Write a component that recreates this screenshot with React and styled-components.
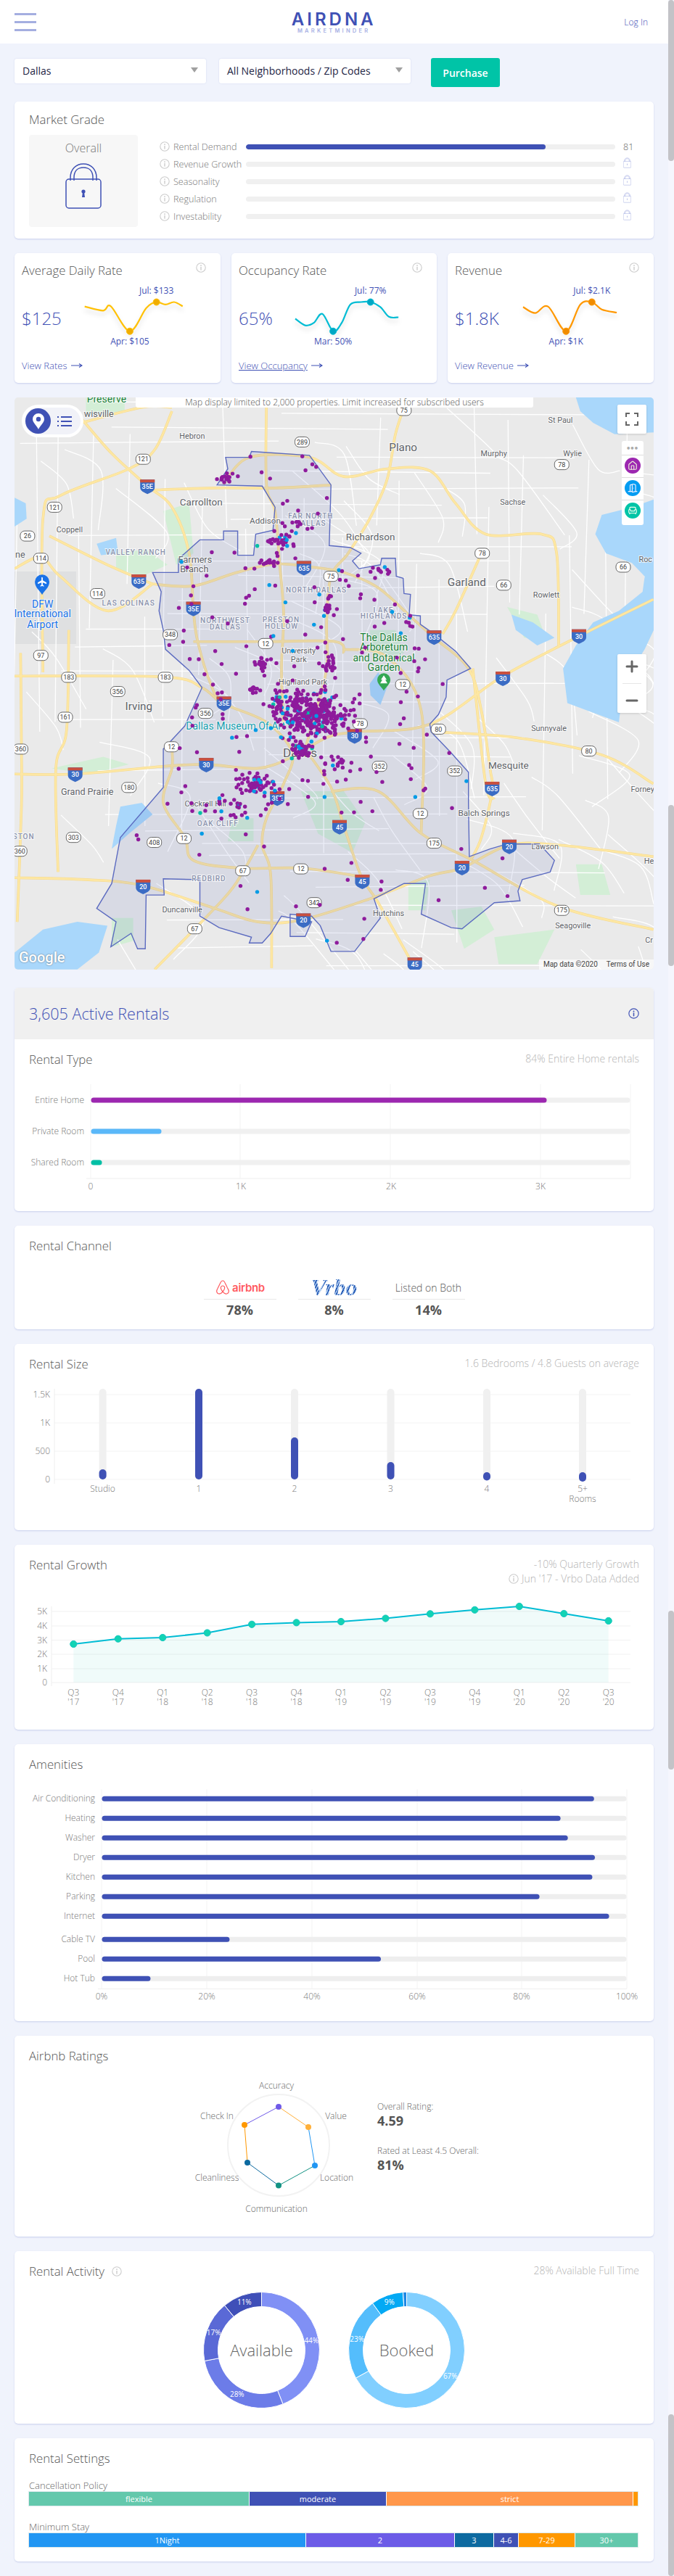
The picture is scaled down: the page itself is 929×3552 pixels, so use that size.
import React from "react";
import styled, { createGlobalStyle } from "styled-components";
import { FaAirbnb } from "react-icons/fa";
import { Home, DoorOpen, Armchair, Plus, Minus } from "lucide-react";

const PRIMARY = "#3f51b5";

const GlobalStyle = createGlobalStyle`
  html, body {
    margin: 0;
    padding: 0;
    overflow: hidden;
    background: #f0f3fc;
  }
  body {
    font-family: "Open Sans", "Liberation Sans", sans-serif;
    color: #5c5c5c;
  }
  * { box-sizing: border-box; }
`;

const Page = styled.div`
  position: relative;
  width: 929px;
  height: 3552px;
  overflow: hidden;
`;

const ScrollTrack = styled.div`
  position: absolute;
  top: 0;
  right: 0;
  width: 8px;
  height: 100%;
  background: #f5f6fd;
`;

const ScrollThumb = styled.div`
  position: absolute;
  left: 0;
  width: 8px;
  top: ${p => p.$top}px;
  height: ${p => p.$height}px;
  background: #c3c3c7;
  border-radius: 4px;
`;

const Header = styled.header`
  height: 60px;
  background: #fff;
  display: flex;
  align-items: center;
  justify-content: space-between;
  padding: 0 36px 0 20px;
`;

const Burger = styled.div`
  width: 30px;
  display: flex;
  flex-direction: column;
  gap: 8px;

  span {
    height: 3px;
    background: #a4aee0;
    display: block;
  }
`;

const Logo = styled.div`
  display: flex;
  flex-direction: column;
  align-items: center;
  margin: 3px 0 0 10px;
`;

const LogoMain = styled.div`
  font-family: "Inter", "Liberation Sans", sans-serif;
  font-size: 24px;
  font-weight: 600;
  letter-spacing: 4px;
  line-height: 23px;
  color: ${PRIMARY};
`;

const LogoSub = styled.div`
  font-family: "Inter", "Liberation Sans", sans-serif;
  font-size: 7.5px;
  font-weight: 600;
  letter-spacing: 3.25px;
  line-height: 10px;
  color: #a7b0e4;
`;

const LogIn = styled.a`
  font-size: 12px;
  color: ${PRIMARY};
  font-weight: 300;
`;

const Main = styled.main`
  padding: 20px 28px 0 20px;
  display: flex;
  flex-direction: column;
  gap: 20px;
`;

const Controls = styled.div`
  height: 40px;
  display: flex;
  align-items: flex-start;
`;

const Select = styled.div`
  width: 264px;
  height: 34px;
  margin: 1px 18px 0 0;
  background: #fff;
  border-radius: 3px;
  box-shadow: 0 0 2px rgba(63, 81, 181, 0.18);
  padding: 7px 11px 0;
  font-size: 14px;
  color: #1d2444;
  display: flex;
  justify-content: space-between;

  &::after {
    content: "";
    width: 0;
    height: 0;
    margin-top: 5px;
    border-left: 5px solid transparent;
    border-right: 5px solid transparent;
    border-top: 7px solid #a0a0a0;
  }
`;

const Purchase = styled.button`
  width: 95px;
  height: 40px;
  margin-left: 10px;
  border: 0;
  border-radius: 3px;
  background: #00c4a7;
  color: #fff;
  font-family: inherit;
  font-size: 14px;
  font-weight: 600;
`;

const Card = styled.section`
  background: #fff;
  border-radius: 5px;
  box-shadow: 0 1px 2px rgba(63, 81, 181, 0.22);
  height: ${p => p.$height}px;
  padding: ${p => p.$padding || "17px 20px 0"};
  overflow: hidden;
  position: relative;
`;

const TitleRow = styled.div`
  display: flex;
  justify-content: space-between;
  align-items: flex-start;
`;

const Title = styled.h3`
  margin: 0;
  font-size: 16.8px;
  line-height: 22px;
  font-weight: 300;
  color: #555;
  display: flex;
  align-items: center;
  gap: 10px;
`;

const Note = styled.div`
  font-size: 14px;
  line-height: 20px;
  font-weight: 300;
  color: #b4b4b4;
  text-align: right;
  display: flex;
  align-items: center;
  justify-content: flex-end;
  gap: 4px;
`;

const GradeLayout = styled.div`
  margin-top: 10px;
  display: flex;
  gap: 30px;
`;

const OverallBox = styled.div`
  width: 150px;
  height: 127px;
  background: #f7f7f7;
  border-radius: 4px;
  display: flex;
  flex-direction: column;
  align-items: center;
  padding-top: 7px;
  gap: 10px;
  font-size: 16px;
  font-weight: 300;
  color: #777;
`;

const GradeRows = styled.div`
  flex: 1;
  padding-top: 4px;
`;

const GradeRow = styled.div`
  height: 24px;
  display: grid;
  grid-template-columns: 19px 100px 509px 33px;
  align-items: center;
  font-size: 12.6px;
  font-weight: 300;
  color: #777;
`;

const GradeValue = styled.div`
  padding-left: 11px;
  color: #666;
`;

const Track = styled.div`
  height: 7px;
  border-radius: 4px;
  background: #f0f0f0;
  overflow: hidden;
`;

const Fill = styled.div`
  height: 100%;
  border-radius: 4px;
  background: ${PRIMARY};
`;

const KpiRow = styled.div`
  display: grid;
  grid-template-columns: 284px 283px 284px;
  gap: 15px;
`;

const KpiCard = styled.section`
  background: #fff;
  border-radius: 5px;
  box-shadow: 0 1px 2px rgba(63, 81, 181, 0.22);
  height: 179px;
  padding: 13px 10px 0;
  position: relative;
`;

const KpiInfo = styled.div`
  position: absolute;
  top: 10px;
  right: 20px;
`;

const KpiBody = styled.div`
  display: grid;
  grid-template-columns: 70px 1fr;
  margin-top: 11px;
  height: 90px;
`;

const KpiValue = styled.div`
  font-size: 24px;
  font-weight: 300;
  color: ${PRIMARY};
  line-height: 42px;
  margin-top: 23px;
  white-space: nowrap;
`;

const SparkSvg = styled.svg`
  overflow: visible;
`;

const SparkLine = styled.path`
  fill: none;
  stroke-width: 2.2;
  filter: drop-shadow(0 5px 3px rgba(0, 0, 0, 0.13));
`;

const SparkLabel = styled.text`
  font-size: 12px;
  font-weight: 400;
  fill: ${PRIMARY};
  text-anchor: middle;
`;

const ViewLink = styled.a`
  display: inline-flex;
  align-items: center;
  gap: 5px;
  margin-top: 10px;
  font-size: 13px;
  font-weight: 300;
  color: ${PRIMARY};

  span {
    text-decoration: ${p => (p.$underlined ? "underline" : "none")};
  }
`;

const MapCard = styled.section`
  position: relative;
  height: 789px;
  border-radius: 5px;
  overflow: hidden;
  background: #eaeaea;
  margin-bottom: 5px;
`;

const MapCanvas = styled.svg`
  display: block;
`;

const MapLabel = styled.text`
  font-family: "Roboto", "Liberation Sans", sans-serif;
  paint-order: stroke;
  stroke: rgba(255, 255, 255, 0.75);
  stroke-width: 2px;
`;

const ShieldText = styled.text`
  font-family: "Roboto", "Liberation Sans", sans-serif;
  font-size: 9px;
  text-anchor: middle;
`;

const MapNotice = styled.div`
  position: absolute;
  top: 0;
  left: 167px;
  width: 548px;
  height: 14px;
  background: #fff;
  border-radius: 0 0 3px 3px;
  font-size: 12px;
  font-weight: 300;
  line-height: 14px;
  color: #555;
  text-align: center;
  white-space: nowrap;
`;

const ViewToggle = styled.div`
  position: absolute;
  top: 10px;
  left: 10px;
  width: 85px;
  height: 45px;
  border-radius: 23px;
  background: #f1f2f8;
  border: 4px solid #fff;
  display: flex;
  align-items: center;
  justify-content: space-between;
  padding: 0 12px 0 1px;
`;

const ToggleOn = styled.div`
  width: 35px;
  height: 35px;
  border-radius: 50%;
  background: ${PRIMARY};
  display: flex;
  align-items: center;
  justify-content: center;
`;

const MapButton = styled.div`
  position: absolute;
  right: 10px;
  top: 10px;
  width: 40px;
  height: 40px;
  background: #fff;
  border-radius: 2px;
  box-shadow: 0 1px 3px rgba(0, 0, 0, 0.15);
  display: flex;
  align-items: center;
  justify-content: center;
`;

const LayerPanel = styled.div`
  position: absolute;
  right: 14px;
  top: 60px;
  width: 30px;
  height: 116px;
  background: #fff;
  border-radius: 3px;
  display: flex;
  flex-direction: column;
  align-items: center;
  padding-top: 3px;
`;

const Dots3 = styled.div`
  font-size: 11px;
  line-height: 14px;
  letter-spacing: 1px;
  font-weight: 800;
  color: #aaa;
  height: 16px;
`;

const LayerItem = styled.div`
  width: 100%;
  border-top: 1px solid #ddd;
  padding: 3px 4px;
  height: 31px;
`;

const LayerDot = styled.div`
  width: 22px;
  height: 22px;
  border-radius: 50%;
  background: ${p => p.$color};
  display: flex;
  align-items: center;
  justify-content: center;
`;

const ZoomBox = styled.div`
  position: absolute;
  right: 10px;
  top: 354px;
  width: 40px;
  height: 81px;
  background: #fff;
  border-radius: 2px;
  box-shadow: 0 1px 3px rgba(0, 0, 0, 0.15);
  display: flex;
  flex-direction: column;
  align-items: center;
  justify-content: space-around;
  color: #666;
`;

const ZoomDivider = styled.div`
  width: 26px;
  height: 1px;
  background: #e6e6e6;
`;

const GoogleMark = styled.div`
  position: absolute;
  left: 6px;
  bottom: 5px;
  font-family: "Roboto", "Liberation Sans", sans-serif;
  font-size: 20px;
  font-weight: 500;
  color: #fff;
  text-shadow: 0 0 2px rgba(0, 0, 0, 0.55);
  line-height: 24px;
`;

const Attribution = styled.div`
  position: absolute;
  right: 0;
  bottom: 0;
  height: 14px;
  padding: 0 6px;
  background: rgba(255, 255, 255, 0.6);
  font-family: "Roboto", "Liberation Sans", sans-serif;
  font-size: 10px;
  line-height: 14px;
  color: #444;
  display: flex;
  gap: 12px;
`;

const RentalsCard = styled.section`
  background: #fff;
  border-radius: 5px;
  box-shadow: 0 1px 2px rgba(63, 81, 181, 0.22);
  height: 308px;
  overflow: hidden;
`;

const RentalsHead = styled.div`
  height: 71px;
  background: #f0f0f0;
  display: flex;
  align-items: center;
  justify-content: space-between;
  padding: 0 20px;
  font-size: 21.6px;
  font-weight: 300;
  color: ${PRIMARY};
`;

const RentalsBody = styled.div`
  padding: 17px 20px 0;
`;

// chart coordinates are page x, so each chart svg starts at the left page edge
const ChartSvg = styled.svg`
  display: block;
  margin: ${p => p.$top || 0}px 0 0 -40px;
  overflow: visible;
`;

const Tick = styled.text`
  font-size: 12px;
  font-weight: 300;
  fill: #777;
  text-anchor: ${p => p.$anchor || "middle"};
`;

const ChannelRow = styled.div`
  display: flex;
  justify-content: center;
  gap: 30px;
  margin-top: 33px;
`;

const Channel = styled.div`
  width: 100px;
  display: flex;
  flex-direction: column;
  align-items: center;
`;

const ChannelLogo = styled.div`
  height: 26px;
  width: 100%;
  display: flex;
  align-items: center;
  justify-content: center;
  gap: 2px;
  font-size: 14px;
  font-weight: 300;
  color: #555;
`;

const AirbnbWord = styled.span`
  color: #ff5a5f;
  font-family: "Inter", "Liberation Sans", sans-serif;
  font-size: 15px;
  font-weight: 600;
  letter-spacing: -0.3px;
`;

const VrboWord = styled.span`
  font-family: "Liberation Serif", serif;
  font-size: 32px;
  line-height: 30px;
  font-weight: 700;
  font-style: italic;
  background: repeating-linear-gradient(115deg, #2a5cb5 0 1.5px, #a9c9f0 1.5px 3px);
  -webkit-background-clip: text;
  background-clip: text;
  color: transparent;
`;

const ChannelPct = styled.div`
  width: 100%;
  border-top: 1px solid #e8e8e8;
  margin-top: 3px;
  padding-top: 2px;
  text-align: center;
  font-size: 18px;
  line-height: 24px;
  font-weight: 700;
  color: #555;
`;

const RatingsRow = styled.div`
  display: flex;
  margin: 13px 0 0 200px;
`;

const RatingStats = styled.div`
  margin: 37px 0 0 10px;
`;

const StatLabel = styled.div`
  font-size: 12px;
  line-height: 18px;
  font-weight: 300;
  color: #666;
`;

const StatValue = styled.div`
  font-size: 18px;
  line-height: 20px;
  font-weight: 700;
  color: #555;
  margin-bottom: 23px;
`;

const RadarSvg = styled.svg`
  display: block;
  overflow: visible;
`;

const RadarLabel = styled.text`
  font-size: 12px;
  font-weight: 300;
  fill: #666;
  text-anchor: middle;
`;

const DonutRow = styled.div`
  display: flex;
  gap: 39px;
  margin: 17px 0 0 240px;
`;

const DonutSvg = styled.svg`
  display: block;
`;

const DonutText = styled.text`
  font-size: 10px;
  fill: #fff;
  text-anchor: middle;
`;

const DonutTitle = styled.text`
  font-size: 22px;
  font-weight: 300;
  fill: #666;
  text-anchor: middle;
`;

const SettingLabel = styled.div`
  font-size: 13px;
  line-height: 16px;
  font-weight: 300;
  color: #666;
  margin-top: ${p => p.$top}px;
`;

const SegBar = styled.div`
  display: flex;
  width: 839px;
  height: 19px;
  margin-top: 1px;
  box-shadow: 0 0 0 1px #dce9ec;
`;

const Seg = styled.div`
  flex: 0 0 ${p => p.$w}px;
  background: ${p => p.$color};
  color: #fff;
  font-size: 11px;
  line-height: 19px;
  text-align: center;
  border-right: 1px solid #fff;

  &:last-child { border-right: 0; }
`;

// --- helpers ---

const smooth = pts => {
  let d = `M${pts[0][0].toFixed(1)} ${pts[0][1].toFixed(1)}`;
  for (let i = 0; i < pts.length - 1; i++) {
    const a = pts[i - 1] || pts[i];
    const b = pts[i];
    const c = pts[i + 1];
    const e = pts[i + 2] || c;
    const c1 = [b[0] + (c[0] - a[0]) / 6, b[1] + (c[1] - a[1]) / 6];
    const c2 = [c[0] - (e[0] - b[0]) / 6, c[1] - (e[1] - b[1]) / 6];
    d += `C${c1[0].toFixed(1)} ${c1[1].toFixed(1)} ${c2[0].toFixed(1)} ${c2[1].toFixed(1)} ${c[0].toFixed(1)} ${c[1].toFixed(1)}`;
  }
  return d;
};

const rng = seed => () => {
  seed |= 0;
  seed = (seed + 0x6d2b79f5) | 0;
  let t = Math.imul(seed ^ (seed >>> 15), 1 | seed);
  t = (t + Math.imul(t ^ (t >>> 7), 61 | t)) ^ t;
  return ((t ^ (t >>> 14)) >>> 0) / 4294967296;
};

const InfoIcon = ({ size = 14, color = "#ccc" }) => (
  <svg width={size} height={size} viewBox="0 0 14 14">
    <circle cx="7" cy="7" r="6.2" fill="none" stroke={color} strokeWidth="1.1" />
    <circle cx="7" cy="4.2" r="0.9" fill={color} />
    <rect x="6.3" y="6" width="1.4" height="4.6" fill={color} />
  </svg>
);

const Lock = ({ w, h, color, stroke = 1.5 }) => (
  <svg width={w} height={h} viewBox="0 0 50 63">
    <path d="M7 24V20C7 8 15 1 25 1s18 7 18 19v4" fill="none" stroke={color} strokeWidth={stroke} />
    <path d="M12 24V20C12 11 17 6 25 6s13 5 13 14v4" fill="none" stroke={color} strokeWidth={stroke} />
    <rect x="1" y="22" width="48" height="40" rx="4" fill="none" stroke={color} strokeWidth={stroke} />
    <circle cx="25" cy="39" r="2.6" fill={color} />
    <path d="M24 40h2l1 7h-4z" fill={color} />
  </svg>
);

// --- market grade ---

const grades = [
  { label: "Rental Demand", fill: 81.2, value: "81" },
  { label: "Revenue Growth" },
  { label: "Seasonality" },
  { label: "Regulation" },
  { label: "Investability" },
];

// --- KPI sparklines; points are read off the reference at 1.688 x 2.958 scale ---

const kpis = [
  {
    title: "Average Daily Rate", value: "$125", link: "View Rates", cardX: 20,
    color: "#ffc107", dot: "#f0ad00",
    line: [[197, 1253], [240, 1270], [258, 1252], [302, 1354], [340, 1260], [364, 1235], [385, 1245], [405, 1235], [425, 1252]],
    high: [364, 1235, "Jul: $133"], low: [302, 1354, "Apr: $105"],
  },
  {
    title: "Occupancy Rate", value: "65%", link: "View Occupancy", cardX: 319, underlined: true,
    color: "#00bcd4", dot: "#00a7c4",
    line: [[687, 1303], [710, 1330], [730, 1320], [750, 1283], [775, 1354], [795, 1320], [815, 1245], [840, 1235], [862, 1235], [885, 1255], [905, 1295], [927, 1297]],
    high: [862, 1235, "Jul: 77%"], low: [775, 1354, "Mar: 50%"],
  },
  {
    title: "Revenue", value: "$1.8K", link: "View Revenue", cardX: 617,
    color: "#ff9800", dot: "#f08c00",
    line: [[1217, 1255], [1245, 1280], [1275, 1253], [1317, 1354], [1350, 1245], [1377, 1235], [1400, 1265], [1435, 1278]],
    high: [1377, 1235, "Jul: $2.1K"], low: [1317, 1354, "Apr: $1K"],
  },
];

const Spark = ({ kpi }) => {
  const cx = zx => zx / 1.688 - (kpi.cardX + 80);
  const cy = zy => zy / 2.958 - 396;
  const pts = kpi.line.map(([x, y]) => [cx(x), cy(y)]);
  return (
    <SparkSvg width="194" height="90">
      <SparkLine d={smooth(pts)} stroke={kpi.color} />
      {[kpi.high, kpi.low].map(([x, y]) => (
        <circle key={x} cx={cx(x)} cy={cy(y)} r="4.5" fill={kpi.dot} stroke={kpi.color} />
      ))}
      <SparkLabel x={cx(kpi.high[0])} y={cy(1188) + 4}>{kpi.high[2]}</SparkLabel>
      <SparkLabel x={cx(kpi.low[0])} y={cy(1395) + 4}>{kpi.low[2]}</SparkLabel>
    </SparkSvg>
  );
};

// --- map data, all in the coordinates of a 1568x1568 view of the map area ---

const mx = zx => zx / 1.688 - 20;
const my = zy => zy / 1.889 - 18;
const toMap = ([x, y]) => [mx(x), my(y)];

const boundary = [[525,190],[580,190],[585,175],[720,185],[770,262],[766,420],[815,425],[840,440],[820,460],[835,480],[885,470],[888,453],[920,453],[922,500],[938,505],[940,545],[955,547],[952,600],[978,603],[978,625],[1010,650],[1060,695],[1095,740],[1040,770],[1038,815],[1020,860],[1000,885],[1003,905],[1050,960],[1090,1010],[1090,1090],[1092,1230],[1140,1210],[1180,1197],[1255,1197],[1290,1240],[1280,1270],[1215,1290],[1205,1320],[1210,1345],[1150,1350],[1075,1418],[1050,1415],[980,1380],[990,1300],[940,1300],[870,1340],[885,1390],[825,1477],[770,1477],[745,1410],[725,1385],[675,1380],[675,1438],[710,1438],[725,1400],[655,1385],[630,1430],[610,1455],[580,1455],[585,1440],[510,1415],[465,1385],[465,1290],[380,1288],[382,1330],[340,1330],[338,1470],[320,1470],[305,1430],[258,1465],[270,1400],[225,1365],[260,1300],[280,1180],[380,1050],[380,950],[430,890],[470,790],[440,745],[385,690],[380,640],[370,590],[375,540],[355,490],[415,490],[415,455],[465,405],[520,405],[520,382],[553,382],[553,445],[590,445],[595,390],[635,380],[640,320],[610,265],[505,262],[530,220]];

const highways = [
  [[355,520],[450,525],[550,490],[640,468],[720,475],[800,490],[880,530],[960,610],[1010,660],[1090,740],[1120,850],[1140,1000],[1145,1060],[1120,1180],[1095,1240]],
  [[190,90],[260,180],[340,262],[400,320],[440,440],[450,590],[460,670],[490,780],[520,830],[620,880],[680,960],[660,1040],[620,1130],[610,1200],[630,1280],[632,1520]],
  [[940,60],[920,130],[900,250],[860,350],[810,440],[770,500],[760,620],[760,740],[730,870],[710,950]],
  [[34,480],[95,450],[140,500],[250,590],[355,520]],
  [[115,395],[250,470],[355,520]],
  [[100,750],[100,350],[140,290],[300,220],[360,170],[400,70]],
  [[190,100],[330,60],[400,60]],
  [[360,275],[500,270],[640,270],[770,262]],
  [[620,34],[620,260],[640,330],[650,460],[660,600],[655,740],[660,900]],
  [[520,260],[580,190],[720,190],[800,240],[900,220],[1000,225],[1060,310],[1130,390],[1260,390],[1295,440],[1300,680]],
  [[34,1015],[175,1015],[380,995],[480,990],[600,1000],[680,970],[760,920],[830,905],[1000,885],[1170,760],[1340,660],[1520,560]],
  [[34,1285],[200,1290],[330,1305],[500,1365],[600,1400],[700,1395],[860,1340],[1000,1280],[1075,1260],[1185,1200],[1300,1200],[1520,1230]],
  [[710,950],[770,1050],[800,1150],[840,1280],[880,1350],[960,1510]],
  [[770,1060],[880,1060],[980,1170],[1100,1240],[1300,1360],[1520,1420]],
  [[400,950],[400,1000],[380,1090],[430,1180],[450,1240],[560,1260],[700,1260],[830,1280]],
  [[800,690],[900,710],[980,850],[980,1170]],
  [[34,760],[380,762],[470,790],[520,840]],
  [[48,700],[50,950],[50,1100],[40,1400]],
  [[1010,905],[1200,920],[1400,965],[1520,1040]],
  [[160,640],[155,900],[130,1000],[135,1270]],
  [[360,1524],[520,1340],[565,1270],[600,1200]],
  [[1120,440],[1060,590],[1030,650]],
  [[1100,740],[1130,1040],[1150,1080]],
  [[450,670],[620,670],[780,670],[800,700]],
];

const water = [
  [[1400,340],[1385,390],[1410,440],[1470,465],[1500,500],[1495,540],[1440,590],[1380,620],[1340,680],[1310,740],[1320,830],[1440,880],[1450,780],[1500,690],[1521,640],[1521,300],[1470,320]],
  [[1340,34],[1521,34],[1521,125],[1430,130],[1380,100],[1350,70]],
  [[34,1480],[100,1420],[180,1400],[250,1410],[230,1480],[180,1524],[34,1524]],
  [[280,1100],[330,1090],[355,1120],[300,1170],[260,1210],[270,1150]],
  [[225,415],[270,400],[275,440],[235,445]],
  [[34,295],[60,310],[62,350],[34,370]],
  [[860,780],[880,750],[900,790],[885,835],[862,810]],
  [[1190,600],[1240,620],[1290,660],[1250,680],[1200,640]],
];

const parks = [
  [[270,440],[340,430],[390,470],[330,500],[270,480]],
  [[380,330],[440,310],[450,440],[410,470]],
  [[200,34],[290,34],[290,70],[200,80]],
  [[1180,580],[1250,600],[1270,660],[1220,660]],
  [[700,1060],[800,1060],[850,1140],[820,1220],[740,1170]],
  [[260,1390],[310,1390],[310,1450],[260,1465]],
  [[1050,1370],[1120,1360],[1150,1420],[1080,1470]],
  [[860,640],[920,640],[940,700],[870,720]],
  [[540,1130],[590,1130],[590,1190],[530,1190]],
  [[120,1000],[240,970],[300,990],[210,1015]],
  [[1150,1440],[1290,1420],[1250,1510],[1160,1510]],
  [[950,1300],[1000,1290],[990,1370],[950,1370]],
  [[1340,1250],[1400,1250],[1420,1330],[1350,1330]],
];

const cityLabels = [
  ["Plano", 938, 173, 17], ["Garland", 1086, 525, 17], ["Irving", 323, 848, 17], ["Dallas", 698, 971, 19],
  ["Carrollton", 468, 316, 15], ["Richardson", 862, 407, 15], ["Mesquite", 1183, 1002, 15], ["Grand Prairie", 203, 1070, 14],
  ["Hebron", 447, 141, 12], ["Coppell", 162, 385, 12], ["Addison", 617, 362, 13], ["Murphy", 1149, 187, 12],
  ["St Paul", 1304, 101, 12], ["Wylie", 1332, 187, 12], ["Sachse", 1193, 313, 12], ["Rowlett", 1271, 555, 12],
  ["Sunnyvale", 1277, 903, 12], ["Forney", 1495, 1062, 12], ["Balch Springs", 1126, 1124, 13], ["Seagoville", 1333, 1417, 12],
  ["Duncanville", 424, 1376, 12], ["Hutchins", 904, 1384, 12], ["Lawson", 1268, 1211, 12], ["Cockrell Hill", 478, 1100, 12],
  ["University", 695, 700, 12], ["Park", 695, 723, 12], ["Highland Park", 705, 782, 12], ["Farmers", 454, 465, 14],
  ["Branch", 452, 489, 14], ["wisville", 230, 85, 14], ["ne", 47, 452, 14], ["Roc", 1502, 462, 12], ["He", 1510, 1248, 12], ["Cr", 1510, 1454, 12],
];

const areaLabels = [
  ["FAR NORTH", 723, 349], ["DALLAS", 723, 368], ["VALLEY RANCH", 316, 443], ["LAS COLINAS", 299, 576],
  ["NORTH DALLAS", 736, 542], ["NORTHWEST", 524, 621], ["DALLAS", 524, 638], ["PRESTON", 654, 619], ["HOLLOW", 655, 637],
  ["LAKE", 892, 595], ["HIGHLANDS", 893, 611], ["OAK CLIFF", 507, 1150], ["REDBIRD", 486, 1294], ["STON", 55, 1184],
];

const poiLabels = [
  ["DFW", 99, 581, "#1a73e8"], ["International", 99, 607, "#1a73e8"], ["Airport", 99, 634, "#1a73e8"],
  ["The Dallas", 893, 668, "#188038"], ["Arboretum", 893, 694, "#188038"], ["and Botanical", 893, 721, "#188038"], ["Garden", 893, 747, "#188038"],
  ["Dallas Museum Of Art", 548, 900, "#129eaf"], ["Preserve", 248, 48, "#188038"],
];

const stateShields = [[289,703,150],[121,333,195],[121,127,320],[26,64,395],[114,95,453],[114,227,545],[348,396,652],[97,95,706],[183,160,763],[183,385,763],[356,274,800],[161,152,867],[356,478,857],[360,48,950],[12,399,944],[352,883,995],[352,1058,1007],[78,838,884],[12,937,782],[12,618,675],[75,770,500],[78,1122,440],[78,1307,209],[66,1172,523],[66,1450,476],[175,1010,1195],[175,1307,1370],[12,978,1118],[12,428,1183],[408,359,1193],[303,171,1180],[180,300,1050],[360,46,1216],[67,565,1267],[12,700,1262],[342,731,1350],[67,453,1418],[80,1370,955],[80,1020,898],[75,940,68]];

const interstates = [["35E",343,265],["35E",450,583],["35E",521,830],["35E",645,1077],["635",323,512],["635",707,477],["635",1010,658],["635",1145,1052],["30",1347,655],["30",1170,765],["30",825,915],["30",480,990],["30",175,1015],["45",790,1152],["45",843,1294],["45",965,1510],["20",1075,1258],["20",1185,1203],["20",333,1307],["20",706,1395]];

const inside = (x, y, poly) => {
  let hit = false;
  for (let i = 0, j = poly.length - 1; i < poly.length; j = i++) {
    const [xi, yi] = poly[i];
    const [xj, yj] = poly[j];
    if (yi > y !== yj > y && x < ((xj - xi) * (y - yi)) / (yj - yi) + xi) hit = !hit;
  }
  return hit;
};

const makeDots = () => {
  const r = rng(2020);
  const gauss = () => (r() + r() + r() - 1.5) / 0.5;
  const clusters = [
    [728, 860, 40, 26, 340], [650, 835, 16, 22, 30], [700, 950, 13, 11, 55], [600, 1040, 22, 11, 70],
    [762, 580, 7, 14, 18], [655, 410, 14, 12, 28], [630, 462, 14, 6, 14], [525, 240, 9, 10, 16],
    [770, 735, 8, 12, 18], [610, 730, 8, 12, 16], [595, 795, 6, 7, 10], [880, 490, 14, 10, 12], [780, 990, 16, 10, 14],
    [540, 1110, 30, 16, 24], [690, 370, 10, 10, 6],
  ];
  const dots = [];
  const color = () => {
    const c = r();
    return c < 0.9 ? "#8e1b9c" : c < 0.985 ? "#039be5" : "#00bfa5";
  };
  clusters.forEach(([x, y, sx, sy, n]) => {
    for (let i = 0; i < n; i++) dots.push([x + gauss() * sx, y + gauss() * sy, color()]);
  });
  let added = 0;
  while (added < 230) {
    const x = 240 + r() * 1050;
    const y = 180 + r() * 1280;
    const weight = y < 1150 && x < 1060 ? 1 : 0.25;
    if (r() < weight && inside(x, y, boundary)) {
      dots.push([x, y, color()]);
      added++;
    }
  }
  return dots;
};

const makeStreets = () => {
  const r = rng(77);
  const lines = [];
  for (let x = 40; x < 1520; x += 34 + r() * 22) {
    const y0 = 34 + r() * 700;
    lines.push([[x, y0], [x + (r() - 0.5) * 24, y0 + 260 + r() * 600]]);
  }
  for (let y = 45; y < 1520; y += 28 + r() * 20) {
    const x0 = 34 + r() * 800;
    lines.push([[x0, y], [x0 + 260 + r() * 600, y + (r() - 0.5) * 14]]);
  }
  for (let i = 0; i < 90; i++) {
    const x = 40 + r() * 1450;
    const y = 40 + r() * 1450;
    lines.push([[x, y], [x + 40 + r() * 80, y + 30 + r() * 90], [x + 20 + r() * 150, y + 120 + r() * 100]]);
  }
  return lines;
};

const mapDots = makeDots();
const mapStreets = makeStreets();

const polyPoints = pts => pts.map(toMap).map(p => p.map(v => v.toFixed(1)).join(",")).join(" ");

const CityMap = () => (
  <MapCanvas width="881" height="789" viewBox="0 0 881 789">
    <rect x="0" y="240" width="85" height="100" fill="#dfe0e1" />
    {parks.map((p, i) => <polygon key={i} points={polyPoints(p)} fill="#d3eed6" />)}
    {mapStreets.map((l, i) => <path key={i} d={smooth(l.map(toMap))} fill="none" stroke="#fff" strokeWidth="1.3" />)}
    {water.map((p, i) => <polygon key={i} points={polyPoints(p)} fill="#a9d7fb" />)}
    {highways.map((h, i) => <path key={i} d={smooth(h.map(toMap))} fill="none" stroke="#f6d98c" strokeWidth="3.6" />)}
    {highways.map((h, i) => <path key={i} d={smooth(h.map(toMap))} fill="none" stroke="#fde7a3" strokeWidth="2.6" />)}
    <polygon points={polyPoints(boundary)} fill="rgba(63,81,181,0.1)" stroke="#5c6bc0" strokeWidth="1.4" />
    {cityLabels.map(([t, x, y, s]) => (
      <MapLabel key={t + x} x={mx(x)} y={my(y)} fontSize={s * 0.9} fill="#5f6368" textAnchor="middle">{t}</MapLabel>
    ))}
    {areaLabels.map(([t, x, y]) => (
      <MapLabel key={t + x} x={mx(x)} y={my(y)} fontSize="10" fontWeight="500" letterSpacing="1" fill="#8b93ad" textAnchor="middle">{t}</MapLabel>
    ))}
    {poiLabels.map(([t, x, y, c]) => (
      <MapLabel key={t} x={mx(x)} y={my(y)} fontSize="14" fill={c} textAnchor="middle">{t}</MapLabel>
    ))}
    {stateShields.map(([n, x, y]) => (
      <g key={`${n}-${x}`} transform={`translate(${mx(x)} ${my(y)})`}>
        <rect x="-10" y="-7" width="20" height="14" rx="6" fill="#fff" stroke="#666" strokeWidth="1" />
        <ShieldText y="3.2" fill="#444">{n}</ShieldText>
      </g>
    ))}
    {interstates.map(([n, x, y]) => (
      <g key={`${n}-${x}`} transform={`translate(${mx(x)} ${my(y)})`}>
        <path d="M-10 -9H10V2C10 7 4 9 0 11C-4 9 -10 7 -10 2Z" fill="#3b6cc4" />
        <path d="M-10 -9H10V-5H-10Z" fill="#c8503f" />
        <ShieldText y="4" fill="#fff" fontWeight="500">{n}</ShieldText>
      </g>
    ))}
    {mapDots.map(([x, y, c], i) => <circle key={i} cx={mx(x)} cy={my(y)} r="2.7" fill={c} />)}
    <g transform={`translate(${mx(893)} ${my(775)})`}>
      <path d="M0 12C-3 7 -9 3 -9 -3A9 9 0 1 1 9 -3C9 3 3 7 0 12Z" fill="#34a853" />
      <path d="M0 -9L4 -3H2L5 2H-5L-2 -3H-4Z" fill="#fff" />
    </g>
    <g transform={`translate(${mx(98)} ${my(520)})`}>
      <path d="M0 15C-3 9 -10 5 -10 -3A10 10 0 1 1 10 -3C10 5 3 9 0 15Z" fill="#1a73e8" />
      <path d="M-.9 -9C0 -10.5 .9 -9 .9 -8V-5L6 -2V0L.9 -2V1L2.5 2.5V3.5L0 2.8L-2.5 3.5V2.5L-.9 1V-2L-6 0V-2L-.9 -5Z" fill="#fff" />
    </g>
  </MapCanvas>
);

// --- charts ---

const RentalTypeChart = () => {
  const bars = [["Entire Home", 27, 754, "#9c27b0"], ["Private Room", 70, 223, "#5ab8f9"], ["Shared Room", 113, 141, "#00bfa5"]];
  return (
    <ChartSvg width="921" height="165" $top={18}>
      {[125, 331, 538, 745, 869].map(x => <line key={x} x1={x} x2={x} y1="5" y2="135" stroke="#f3f3f3" />)}
      <line x1="119" x2="869" y1="135" y2="135" stroke="#eee" />
      {bars.map(([label, y, end, color]) => (
        <g key={label}>
          <Tick x="116" y={y + 4} $anchor="end">{label}</Tick>
          <line x1="129" x2="865" y1={y} y2={y} stroke="#f0f0f0" strokeWidth="7" strokeLinecap="round" />
          <line x1="129" x2={end - 4} y1={y} y2={y} stroke={color} strokeWidth="7" strokeLinecap="round" />
        </g>
      ))}
      {[["0", 125], ["1K", 332], ["2K", 539], ["3K", 745]].map(([t, x]) => <Tick key={t} x={x} y="150">{t}</Tick>)}
    </ChartSvg>
  );
};

const RentalSizeChart = () => {
  const origin = 1905;
  const ticks = [["1.5K", 1923], ["1K", 1962], ["500", 2001], ["0", 2040]];
  const bars = [[141.6, 2026, "Studio"], [274, 1915, "1"], [406, 1982, "2"], [538.5, 2016, "3"], [671, 2031.5, "4"], [803, 2033, "5+"]];
  return (
    <ChartSvg width="921" height="175" $top={13}>
      {ticks.map(([t, y]) => (
        <g key={t}>
          <line x1="75" x2="869" y1={y - origin} y2={y - origin} stroke="#f3f3f3" />
          <Tick x="69" y={y - origin + 4} $anchor="end">{t}</Tick>
        </g>
      ))}
      <line x1="75" x2="75" y1={1915 - origin} y2={2046 - origin} stroke="#eee" />
      {bars.map(([x, top, label]) => (
        <g key={label}>
          <line x1={x} x2={x} y1={1920 - origin} y2={2035 - origin} stroke="#f0f0f0" strokeWidth="10" strokeLinecap="round" />
          <line x1={x} x2={x} y1={top + 5 - origin} y2={2035 - origin} stroke={PRIMARY} strokeWidth="10" strokeLinecap="round" />
          <Tick x={x} y={2057 - origin}>{label}</Tick>
        </g>
      ))}
      <Tick x="803" y={2071 - origin}>Rooms</Tick>
    </ChartSvg>
  );
};

const growth = [1240, 1219, 1214, 1195, 1161, 1154, 1150, 1137, 1119, 1103, 1089, 1118, 1147];
const quarters = ["Q3 '17", "Q4 '17", "Q1 '18", "Q2 '18", "Q3 '18", "Q4 '18", "Q1 '19", "Q2 '19", "Q3 '19", "Q4 '19", "Q1 '20", "Q2 '20", "Q3 '20"];

const RentalGrowthChart = () => {
  const origin = 2205;
  const ticks = [["5K", 2222], ["4K", 2242], ["3K", 2261.5], ["2K", 2281], ["1K", 2301], ["0", 2320]];
  const pts = growth.map((z, i) => [101.3 + i * 61.45, 1840 + z / 2.904 - origin]);
  const floor = 2320 - origin;
  const area = `${pts.map(p => p.join(",")).join(" ")} ${pts[12][0]},${floor} ${pts[0][0]},${floor}`;
  return (
    <ChartSvg width="921" height="160" $top={18}>
      {ticks.map(([t, y]) => (
        <g key={t}>
          <line x1="71" x2="869" y1={y - origin} y2={y - origin} stroke="#f1f1f1" />
          <Tick x="65" y={y - origin + 4} $anchor="end">{t}</Tick>
        </g>
      ))}
      <line x1="71" x2="71" y1={2215 - origin} y2={2325 - origin} stroke="#eee" />
      <polygon points={area} fill="rgba(0,191,165,0.06)" />
      <polyline points={pts.map(p => p.join(",")).join(" ")} fill="none" stroke="#00bcd4" strokeWidth="2" />
      {pts.map(([x, y], i) => (
        <g key={i}>
          <circle cx={x} cy={y} r="4.6" fill="#12d3b4" stroke="#18c6c0" />
          <Tick x={x} y={floor + 18}>{quarters[i].split(" ")[0]}</Tick>
          <Tick x={x} y={floor + 31}>{quarters[i].split(" ")[1]}</Tick>
        </g>
      ))}
    </ChartSvg>
  );
};

const amenities = [
  ["Air Conditioning", 271, 1383], ["Heating", 352, 1305], ["Washer", 433, 1322], ["Dryer", 514, 1385], ["Kitchen", 595, 1379],
  ["Parking", 676, 1256], ["Internet", 757, 1418], ["Cable TV", 853, 535], ["Pool", 934, 887], ["Hot Tub", 1015, 351],
];

const AmenitiesChart = () => {
  const origin = 2460;
  const zy = z => 2390 + z / 3 - origin;
  return (
    <ChartSvg width="921" height="310" $top={16}>
      {[140, 285, 430, 575, 719, 864].map((x, i) => (
        <g key={x}>
          <line x1={x} x2={x} y1={zy(232)} y2={zy(1057)} stroke="#f3f3f3" />
          <Tick x={x} y={zy(1088) + 4}>{i * 20}%</Tick>
        </g>
      ))}
      <line x1="135" x2="864" y1={zy(1057)} y2={zy(1057)} stroke="#eee" />
      {amenities.map(([label, z, end]) => (
        <g key={label}>
          <Tick x="131" y={zy(z) + 4} $anchor="end">{label}</Tick>
          <line x1="144" x2="860" y1={zy(z)} y2={zy(z)} stroke="#eeeeee" strokeWidth="7" strokeLinecap="round" />
          <line x1="144" x2={end / 1.688 - 4} y1={zy(z)} y2={zy(z)} stroke={PRIMARY} strokeWidth="7" strokeLinecap="round" />
        </g>
      ))}
    </ChartSvg>
  );
};

const radarPts = [
  ["Accuracy", 384, 2906, "#6f5ae8", 381, 2877],
  ["Value", 425, 2934, "#ffb03a", 463, 2919],
  ["Location", 434, 2987, "#2196f3", 464, 3004],
  ["Communication", 384, 3014.5, "#129283", 381, 3047],
  ["Cleanliness", 341, 2983, "#0d6aa0", 299, 3004],
  ["Check In", 337, 2931, "#ff9800", 299, 2919],
];

const Radar = () => {
  const ox = 240;
  const oy = 2860;
  return (
    <RadarSvg width="270" height="200">
      <circle cx={384 - ox} cy={2959 - oy} r="70" fill="none" stroke="#f2f2f2" strokeWidth="2" />
      {radarPts.map(([label, x, y], i) => {
        const next = radarPts[(i + 1) % 6];
        return <line key={label} x1={x - ox} y1={y - oy} x2={next[1] - ox} y2={next[2] - oy} stroke={next[3]} strokeWidth="1" />;
      })}
      {radarPts.map(([label, x, y, c, lx, ly]) => (
        <g key={label}>
          <circle cx={x - ox} cy={y - oy} r="4" fill={c} />
          <RadarLabel x={lx - ox} y={ly - oy + 4}>{label}</RadarLabel>
        </g>
      ))}
    </RadarSvg>
  );
};

const ring = (start, end, R, r) => {
  const pt = (a, rad) => [Math.sin(a) * rad, -Math.cos(a) * rad];
  const a0 = start * 2 * Math.PI;
  const a1 = end * 2 * Math.PI;
  const large = end - start > 0.5 ? 1 : 0;
  const [x0, y0] = pt(a0, R);
  const [x1, y1] = pt(a1, R);
  const [x2, y2] = pt(a1, r);
  const [x3, y3] = pt(a0, r);
  return `M${x0} ${y0}A${R} ${R} 0 ${large} 1 ${x1} ${y1}L${x2} ${y2}A${r} ${r} 0 ${large} 0 ${x3} ${y3}Z`;
};

const Donut = ({ title, segments }) => {
  let at = 0;
  return (
    <DonutSvg width="161" height="161" viewBox="-80.5 -80.5 161 161">
      {segments.map(([pct, color, label]) => {
        const start = at;
        at += pct;
        const mid = (start + at) * Math.PI;
        return (
          <g key={color}>
            <path d={ring(start, at, 80, 60)} fill={color} stroke="#fff" strokeWidth="1" />
            {label && <DonutText x={Math.sin(mid) * 70} y={-Math.cos(mid) * 70 + 3.5}>{label}</DonutText>}
          </g>
        );
      })}
      <DonutTitle y="8">{title}</DonutTitle>
    </DonutSvg>
  );
};

const cancellation = [
  ["flexible", 304, "#63c8ac"], ["moderate", 189, PRIMARY], ["strict", 340, "#ff974a"], ["", 6, "#ff9800"],
];
const minStay = [
  ["1Night", 382, "#2196f3"], ["2", 205, "#6c5ce7"], ["3", 54, "#0d6aa0"], ["4-6", 34, PRIMARY], ["7-29", 78, "#ff9800"], ["30+", 86, "#63c8ac"],
];

const scrollThumbs = [[0, 222], [1110, 222], [2221, 219], [3329, 223]];

export default function App() {
  return (
    <Page>
      <GlobalStyle />
      <Header>
        <Burger><span /><span /><span /></Burger>
        <Logo>
          <LogoMain>AIRDNA</LogoMain>
          <LogoSub>MARKETMINDER</LogoSub>
        </Logo>
        <LogIn>Log In</LogIn>
      </Header>
      <Main>
        <Controls>
          <Select>Dallas</Select>
          <Select>All Neighborhoods / Zip Codes</Select>
          <Purchase>Purchase</Purchase>
        </Controls>

        <Card $height={189} $padding="14px 20px 0">
          <Title>Market Grade</Title>
          <GradeLayout>
            <OverallBox>
              Overall
              <Lock w={50} h={63} color={PRIMARY} />
            </OverallBox>
            <GradeRows>
              {grades.map(g => (
                <GradeRow key={g.label}>
                  <InfoIcon />
                  {g.label}
                  <Track>{g.fill && <Fill style={{ width: `${g.fill}%` }} />}</Track>
                  <GradeValue>{g.value || <Lock w={11} h={15} color="#b3bbe6" stroke={3} />}</GradeValue>
                </GradeRow>
              ))}
            </GradeRows>
          </GradeLayout>
        </Card>

        <KpiRow>
          {kpis.map(k => (
            <KpiCard key={k.title}>
              <KpiInfo><InfoIcon /></KpiInfo>
              <Title>{k.title}</Title>
              <KpiBody>
                <KpiValue>{k.value}</KpiValue>
                <Spark kpi={k} />
              </KpiBody>
              <ViewLink $underlined={k.underlined}>
                <span>{k.link}</span>
                <svg width="16" height="8" viewBox="0 0 16 8">
                  <path d="M0 4H14M11 1.5L15 4L11 6.5" fill="none" stroke={PRIMARY} strokeWidth="1.2" />
                </svg>
              </ViewLink>
            </KpiCard>
          ))}
        </KpiRow>

        <MapCard>
          <CityMap />
          <MapNotice>Map display limited to 2,000 properties. Limit increased for subscribed users</MapNotice>
          <ViewToggle>
            <ToggleOn>
              <svg width="16" height="22" viewBox="0 0 16 22">
                <path d="M8 22C6 17 0 13 0 8A8 8 0 1 1 16 8C16 13 10 17 8 22Z" fill="#fff" />
                <circle cx="8" cy="8" r="3.2" fill={PRIMARY} />
              </svg>
            </ToggleOn>
            <svg width="20" height="16" viewBox="0 0 20 16">
              <path d="M5 2H20M5 8H20M5 14H20" stroke={PRIMARY} strokeWidth="1.8" />
              <path d="M0 2H2M0 8H2M0 14H2" stroke={PRIMARY} strokeWidth="1.8" />
            </svg>
          </ViewToggle>
          <MapButton>
            <svg width="18" height="18" viewBox="0 0 18 18">
              <path d="M1 6V1H6M12 1H17V6M17 12V17H12M6 17H1V12" fill="none" stroke="#666" strokeWidth="2" />
            </svg>
          </MapButton>
          <LayerPanel>
            <Dots3>•••</Dots3>
            <LayerItem><LayerDot $color="#9c27b0"><Home size={14} color="#eed" /></LayerDot></LayerItem>
            <LayerItem><LayerDot $color="#039cf2"><DoorOpen size={14} color="#eef" /></LayerDot></LayerItem>
            <LayerItem><LayerDot $color="#00c4a7"><Armchair size={14} color="#efe" /></LayerDot></LayerItem>
          </LayerPanel>
          <ZoomBox>
            <Plus size={24} strokeWidth={3} />
            <ZoomDivider />
            <Minus size={24} strokeWidth={3} />
          </ZoomBox>
          <GoogleMark>Google</GoogleMark>
          <Attribution><span>Map data ©2020</span><span>Terms of Use</span></Attribution>
        </MapCard>

        <RentalsCard>
          <RentalsHead>
            3,605 Active Rentals
            <InfoIcon size={15} color={PRIMARY} />
          </RentalsHead>
          <RentalsBody>
            <TitleRow>
              <Title>Rental Type</Title>
              <Note>84% Entire Home rentals</Note>
            </TitleRow>
            <RentalTypeChart />
          </RentalsBody>
        </RentalsCard>

        <Card $height={143}>
          <Title>Rental Channel</Title>
          <ChannelRow>
            <Channel>
              <ChannelLogo>
                <FaAirbnb size={22} color="#ff5a5f" />
                <AirbnbWord>airbnb</AirbnbWord>
              </ChannelLogo>
              <ChannelPct>78%</ChannelPct>
            </Channel>
            <Channel>
              <ChannelLogo><VrboWord>Vrbo</VrboWord></ChannelLogo>
              <ChannelPct>8%</ChannelPct>
            </Channel>
            <Channel>
              <ChannelLogo>Listed on Both</ChannelLogo>
              <ChannelPct>14%</ChannelPct>
            </Channel>
          </ChannelRow>
        </Card>

        <Card $height={257}>
          <TitleRow>
            <Title>Rental Size</Title>
            <Note>1.6 Bedrooms / 4.8 Guests on average</Note>
          </TitleRow>
          <RentalSizeChart />
        </Card>

        <Card $height={255}>
          <TitleRow>
            <Title>Rental Growth</Title>
            <div>
              <Note>-10% Quarterly Growth</Note>
              <Note><InfoIcon /> Jun '17 - Vrbo Data Added</Note>
            </div>
          </TitleRow>
          <RentalGrowthChart />
        </Card>

        <Card $height={382}>
          <Title>Amenities</Title>
          <AmenitiesChart />
        </Card>

        <Card $height={277}>
          <Title>Airbnb Ratings</Title>
          <RatingsRow>
            <Radar />
            <RatingStats>
              <StatLabel>Overall Rating:</StatLabel>
              <StatValue>4.59</StatValue>
              <StatLabel>Rated at Least 4.5 Overall:</StatLabel>
              <StatValue>81%</StatValue>
            </RatingStats>
          </RatingsRow>
        </Card>

        <Card $height={238}>
          <TitleRow>
            <Title>Rental Activity <InfoIcon /></Title>
            <Note>28% Available Full Time</Note>
          </TitleRow>
          <DonutRow>
            <Donut title="Available" segments={[[0.44, "#8090f5", "44%"], [0.28, "#6c7ce8", "28%"], [0.17, "#5a69d6", "17%"], [0.11, "#3f4fb8", "11%"]]} />
            <Donut title="Booked" segments={[[0.67, "#81cfff", "67%"], [0.23, "#54bdfc", "23%"], [0.09, "#03a9f4", "9%"], [0.01, "#1e88e5", ""]]} />
          </DonutRow>
        </Card>

        <Card $height={170}>
          <Title>Rental Settings</Title>
          <SettingLabel $top={18}>Cancellation Policy</SettingLabel>
          <SegBar>
            {cancellation.map(([t, w, c]) => <Seg key={c} $w={w} $color={c}>{t}</Seg>)}
          </SegBar>
          <SettingLabel $top={21}>Minimum Stay</SettingLabel>
          <SegBar>
            {minStay.map(([t, w, c]) => <Seg key={t} $w={w} $color={c}>{t}</Seg>)}
          </SegBar>
        </Card>
      </Main>
      <ScrollTrack>
        {scrollThumbs.map(([top, h]) => <ScrollThumb key={top} $top={top} $height={h} />)}
      </ScrollTrack>
    </Page>
  );
}
